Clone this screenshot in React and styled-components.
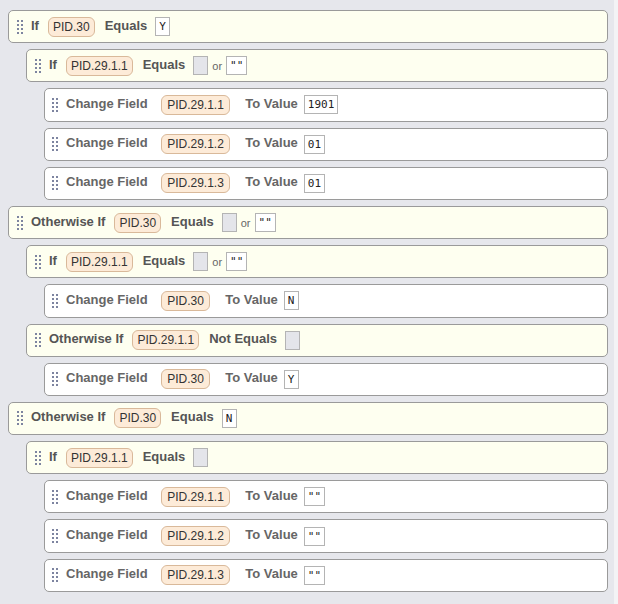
import React from 'react';
import styled, { createGlobalStyle } from 'styled-components';

const GlobalStyle = createGlobalStyle`
    html, body {
        margin: 0;
        padding: 0;
        background: #f3f3f5;
        font-family: "Liberation Sans", Arial, sans-serif;
    }
`;

const Panel = styled.div`
    width: 614px;
    box-sizing: border-box;
    background: #e6e7ec;
    padding: 10px 6px 12px 8px;
    display: flex;
    flex-direction: column;
    gap: 6px;
`;

const Row = styled.div`
    height: 33.2px;
    box-sizing: border-box;
    margin-left: ${p => p.$level * 18}px;
    border: 1px solid #9a9a9a;
    border-radius: 5px;
    background: ${p => (p.$kind === 'cond' ? '#fefff0' : '#ffffff')};
    display: flex;
    align-items: center;
    padding-left: ${p => (p.$kind === 'cond' ? 8 : 7)}px;
`;

const Grip = styled.span`
    display: grid;
    grid-template-columns: repeat(2, 2px);
    grid-auto-rows: 2px;
    column-gap: 2px;
    row-gap: 2px;
    margin-right: 8px;
    span {
        background: #7d84a0;
    }
`;

const Label = styled.span`
    font-size: 13px;
    font-weight: bold;
    color: ${p => (p.$kind === 'cond' ? '#555' : '#666')};
    white-space: nowrap;
    margin-bottom: 3px;
`;

const Chip = styled.span`
    font-size: 12px;
    color: #333;
    background: #fdebd8;
    border: 1px solid #d9b99a;
    border-radius: 6px;
    height: 18px;
    line-height: 18px;
    padding: ${p => (p.$kind === 'cond' ? '0 4px' : '0 5.5px')};
    margin: ${p => (p.$kind === 'cond' ? '0 10px 0 9px' : '0 15px 0 13px')};
    white-space: nowrap;
`;

const Value = styled.span`
    font-family: "DejaVu Sans Mono", "Liberation Mono", monospace;
    font-size: 11px;
    color: #222;
    background: ${p => (p.$empty ? '#e4e5ea' : '#ffffff')};
    border: 1px solid #b4b4b4;
    box-sizing: border-box;
    height: 19px;
    min-width: 15px;
    line-height: 17px;
    padding: 0 3px;
    margin-left: ${p => (p.$first ? (p.$kind === 'cond' ? 8 : 6) : 0)}px;
`;

const Or = styled.span`
    font-size: 11px;
    color: #666;
    margin: 0 4px 0 4px;
`;

const rows = [
    { level: 0, kind: 'cond', label: 'If', field: 'PID.30', op: 'Equals', values: ['Y'] },
    { level: 1, kind: 'cond', label: 'If', field: 'PID.29.1.1', op: 'Equals', values: ['', '""'] },
    { level: 2, kind: 'act', field: 'PID.29.1.1', values: ['1901'] },
    { level: 2, kind: 'act', field: 'PID.29.1.2', values: ['01'] },
    { level: 2, kind: 'act', field: 'PID.29.1.3', values: ['01'] },
    { level: 0, kind: 'cond', label: 'Otherwise If', field: 'PID.30', op: 'Equals', values: ['', '""'] },
    { level: 1, kind: 'cond', label: 'If', field: 'PID.29.1.1', op: 'Equals', values: ['', '""'] },
    { level: 2, kind: 'act', field: 'PID.30', values: ['N'] },
    { level: 1, kind: 'cond', label: 'Otherwise If', field: 'PID.29.1.1', op: 'Not Equals', values: [''] },
    { level: 2, kind: 'act', field: 'PID.30', values: ['Y'] },
    { level: 0, kind: 'cond', label: 'Otherwise If', field: 'PID.30', op: 'Equals', values: ['N'] },
    { level: 1, kind: 'cond', label: 'If', field: 'PID.29.1.1', op: 'Equals', values: [''] },
    { level: 2, kind: 'act', field: 'PID.29.1.1', values: ['""'] },
    { level: 2, kind: 'act', field: 'PID.29.1.2', values: ['""'] },
    { level: 2, kind: 'act', field: 'PID.29.1.3', values: ['""'] },
];

const RuleRow = ({ data }) => {
    const { level, kind } = data;
    return (
        <Row $level={level} $kind={kind}>
            <Grip>
                {Array.from({ length: 8 }).map((_, i) => <span key={i} />)}
            </Grip>
            <Label $kind={kind}>{kind === 'cond' ? data.label : 'Change Field'}</Label>
            <Chip $kind={kind}>{data.field}</Chip>
            <Label $kind={kind}>{kind === 'cond' ? data.op : 'To Value'}</Label>
            {data.values.map((v, i) => (
                <React.Fragment key={i}>
                    {i > 0 && <Or>or</Or>}
                    <Value $kind={kind} $first={i === 0} $empty={v === ''}>{v}</Value>
                </React.Fragment>
            ))}
        </Row>
    );
};

export default () => {
    return (
        <>
            <GlobalStyle />
            <Panel>
                {rows.map((r, i) => <RuleRow key={i} data={r} />)}
            </Panel>
        </>
    );
};
